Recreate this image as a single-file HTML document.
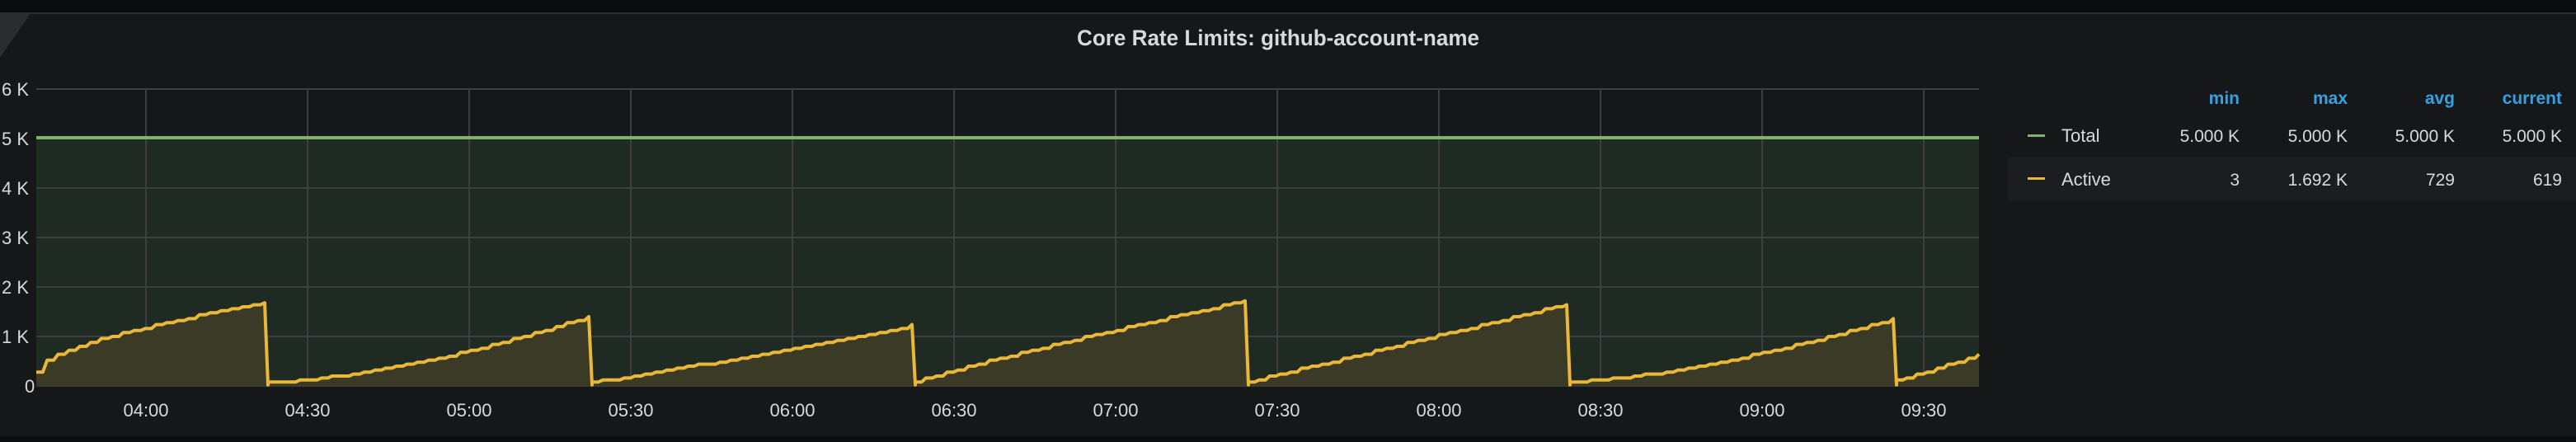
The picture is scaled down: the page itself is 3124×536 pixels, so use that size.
<!DOCTYPE html>
<html><head><meta charset="utf-8"><style>
html,body{margin:0;padding:0;background:#0b0c0e;}
body{width:3124px;height:536px;overflow:hidden;font-family:"Liberation Sans",sans-serif;}
</style></head><body>
<svg id="s" width="3124" height="536" xmlns="http://www.w3.org/2000/svg" style="display:block">
<rect x="0" y="0" width="3124" height="536" fill="#0b0c0e"/>
<rect x="0" y="15" width="3124" height="514" fill="#161719"/>
<rect x="0" y="15" width="3124" height="2" fill="#2a2b2e"/>
<polygon points="0,15 38,15 0,70" fill="#2a2c30"/>
<text x="1550" y="55" fill="#d8d9da" font-size="27" font-weight="bold" text-anchor="middle" textLength="488" lengthAdjust="spacingAndGlyphs">Core Rate Limits: github-account-name</text>
<rect x="44" y="167" width="2356" height="301" fill="#1f2a23"/>
<g id="grid" stroke="#3c3e42" stroke-width="2"></g>
<path id="fill" fill="#3a3a26" stroke="none"/>
<line x1="44" y1="167" x2="2400" y2="167" stroke="#7eb26d" stroke-width="4"/>
<path id="line" fill="none" stroke="#eab839" stroke-width="4" stroke-linejoin="round"/>
<g id="labels" fill="#d8d9da" font-size="22"></g>
<rect x="2435" y="190" width="689" height="53" fill="#1b1d20"/>
<g font-size="21" text-anchor="end">
<text x="2716" y="126" fill="#33a2e5" font-weight="bold">min</text>
<text x="2847" y="126" fill="#33a2e5" font-weight="bold">max</text>
<text x="2977" y="126" fill="#33a2e5" font-weight="bold">avg</text>
<text x="3107" y="126" fill="#33a2e5" font-weight="bold">current</text>
<g fill="#d8d9da">
<text x="2716" y="172">5.000 K</text><text x="2847" y="172">5.000 K</text><text x="2977" y="172">5.000 K</text><text x="3107" y="172">5.000 K</text>
<text x="2716" y="225">3</text><text x="2847" y="225">1.692 K</text><text x="2977" y="225">729</text><text x="3107" y="225">619</text>
</g></g>
<rect x="2459" y="163" width="21" height="3" fill="#7eb26d"/>
<rect x="2459" y="215" width="21" height="3" fill="#eab839"/>
<text x="2500" y="172" fill="#d8d9da" font-size="22">Total</text>
<text x="2500" y="225" fill="#d8d9da" font-size="22">Active</text>
</svg>
<script>
var NS="http://www.w3.org/2000/svg";
function Y(v){return 468-v*60;}
var g=document.getElementById('grid'),lb=document.getElementById('labels');
function el(p,t,a,txt){var e=document.createElementNS(NS,t);for(var k in a)e.setAttribute(k,a[k]);if(txt)e.textContent=txt;p.appendChild(e);}
for(var i=0;i<=6;i++){if(i!=5)el(g,'line',{x1:44,x2:2400,y1:Y(i),y2:Y(i)});el(lb,'text',{x:i==0?30:2,y:Y(i)+8},i==0?'0':i+' K');}
var times=['04:00','04:30','05:00','05:30','06:00','06:30','07:00','07:30','08:00','08:30','09:00','09:30'];
for(var j=0;j<12;j++){var x=177+196*j;el(g,'line',{x1:x,x2:x,y1:108,y2:468});el(lb,'text',{x:x,y:505,'text-anchor':'middle'},times[j]);}
var cyc=[[44,321,0.28,1.68,0.6],[325,714,0.08,1.4,1.6],[718,1106,0.08,1.22,1.1],[1110,1510,0.08,1.72,0.9],[1514,1900,0.08,1.65,1.0],[1904,2296,0.08,1.35,1.5],[2300,2400,0.1,0.62,1.0]];
var d='';
cyc.forEach(function(c,ci){var x0=c[0],x1=c[1],a=c[2],b=c[3],p=c[4];var n=Math.round((x1-x0)/13);
 for(var k=0;k<=n;k++){var t=k/n;var x=x0+(x1-x0)*t;var v=a+(b-a)*Math.pow(t,p);v=Math.round(v*25)/25;
  d+=(d?'L':'M')+x.toFixed(1)+','+Y(v).toFixed(1);
  if(k<n){var x2=x+(x1-x0)/n*0.6;d+='L'+x2.toFixed(1)+','+Y(v).toFixed(1);} }
 if(ci<cyc.length-1){d+='L'+(x1+4)+','+Y(0.02);}
});
document.getElementById('line').setAttribute('d',d);
document.getElementById('fill').setAttribute('d',d+'L2400,468L44,468Z');
</script>
</body></html>
